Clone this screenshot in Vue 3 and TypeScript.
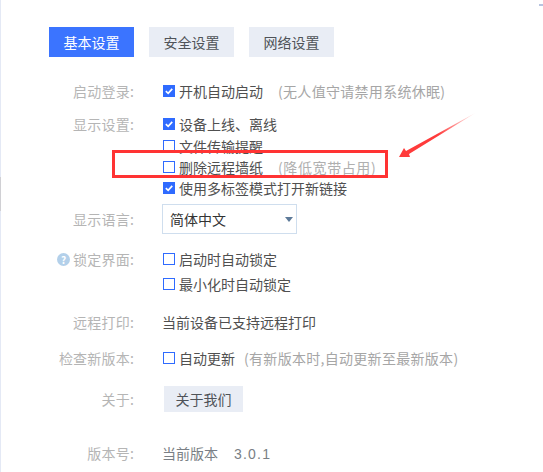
<script setup lang="ts">
const tabs = [
  { label: '基本设置', active: true },
  { label: '安全设置', active: false },
  { label: '网络设置', active: false },
]
</script>

<template>
  <div class="page">
    <div class="tabs">
      <div v-for="t in tabs" :key="t.label" class="tab" :class="{ active: t.active }">{{ t.label }}</div>
    </div>

    <div class="row r-start">
      <div class="label">启动登录:</div>
      <div class="value">
        <span class="cb on"><svg viewBox="0 0 12 12"><path d="M2.2 6.2 5 8.8 9.9 3.4" /></svg></span>
        <span>开机自动启动</span>
        <span class="hint h1">(无人值守请禁用系统休眠)</span>
      </div>
    </div>

    <div class="row r-display">
      <div class="label">显示设置:</div>
      <div class="stack">
        <div class="value line l1">
          <span class="cb on"><svg viewBox="0 0 12 12"><path d="M2.2 6.2 5 8.8 9.9 3.4" /></svg></span>
          <span>设备上线、离线</span>
        </div>
        <div class="value line l2"><span class="cb"></span><span>文件传输提醒</span></div>
        <div class="value line l3">
          <span class="cb"></span><span>删除远程墙纸</span>
          <span class="hint h2">(降低宽带占用)</span>
        </div>
        <div class="value line l4">
          <span class="cb on"><svg viewBox="0 0 12 12"><path d="M2.2 6.2 5 8.8 9.9 3.4" /></svg></span>
          <span>使用多标签模式打开新链接</span>
        </div>
      </div>
    </div>

    <div class="row r-lang">
      <div class="label">显示语言:</div>
      <div class="select"><span>简体中文</span><i class="caret"></i></div>
    </div>

    <div class="row r-lock">
      <div class="label">
        <span class="help">?</span>锁定界面:
      </div>
      <div class="stack lock-stack">
        <div class="value"><span class="cb"></span><span>启动时自动锁定</span></div>
        <div class="value"><span class="cb"></span><span>最小化时自动锁定</span></div>
      </div>
    </div>

    <div class="row r-print">
      <div class="label">远程打印:</div>
      <div class="plain">当前设备已支持远程打印</div>
    </div>

    <div class="row r-update">
      <div class="label">检查新版本:</div>
      <div class="value">
        <span class="cb"></span><span>自动更新</span>
        <span class="hint h3">(有新版本时,自动更新至最新版本)</span>
      </div>
    </div>

    <div class="row r-about">
      <div class="label">关于:</div>
      <div class="about-btn">关于我们</div>
    </div>

    <div class="row r-version">
      <div class="label">版本号:</div>
      <div class="version"><span>当前版本</span><span class="num">3.0.1</span></div>
    </div>

    <div class="mark-box"></div>
    <svg class="arrow" viewBox="0 0 100 60" width="100" height="60">
      <defs>
        <linearGradient id="fade" gradientUnits="userSpaceOnUse" x1="80" y1="2" x2="2" y2="47">
          <stop offset="0" stop-color="#ff3b3b" stop-opacity="0" />
          <stop offset="0.5" stop-color="#ff3b3b" />
          <stop offset="1" stop-color="#ff3b3b" />
        </linearGradient>
      </defs>
      <polygon points="80,2 12,44 13,47 2,47 7,38 9,41" fill="url(#fade)" />
    </svg>
    <i class="edge"></i>
    <i class="edge-grey"></i>
    <i class="corner"></i>
  </div>
</template>

<style>
html, body { margin: 0; background: #fff; }
</style>

<style scoped>
.page {
  position: relative;
  box-sizing: border-box;
  width: 543px;
  height: 472px;
  overflow: hidden;
  padding-top: 27px;
  background: #fff;
  font-family: "Noto Sans CJK SC", "Liberation Sans", sans-serif;
  font-size: 14px;
  color: #505050;
}
.tabs { display: flex; gap: 15px; padding-left: 49px; margin-bottom: 21px; }
.tab {
  width: 85px;
  height: 30px;
  line-height: 30px;
  text-align: center;
  font-size: 14px;
  background: #e9edf5;
  color: #4f5358;
}
.tab.active { background: #3b74ff; color: #fff; }
.row { display: flex; align-items: flex-start; }
.label {
  width: 134px;
  flex: none;
  height: 26px;
  line-height: 26px;
  text-align: right;
  color: #b5b5b5;
  letter-spacing: 0.2px;
  display: flex;
  justify-content: flex-end;
  align-items: center;
}
.value {
  display: flex;
  align-items: center;
  height: 26px;
  margin-left: 29px;
  white-space: nowrap;
}
.cb {
  box-sizing: border-box;
  width: 12px;
  height: 12px;
  flex: none;
  margin-right: 4px;
  border: 1px solid #2f6bff;
  background: #fff;
  display: inline-flex;
}
.cb.on { background: #2f6bff; }
.cb svg { width: 10px; height: 10px; }
.cb svg path { fill: none; stroke: #fff; stroke-width: 2; }
.hint { color: #a6a6a6; letter-spacing: 0.3px; }
.h1 { margin-left: 15px; }
.h2 { margin-left: 15px; color: #b0b0b0; letter-spacing: 0.6px; }
.h3 { margin-left: 9px; }
.r-start { margin-bottom: 7px; height: 26px; }
.r-display { height: 93px; margin-bottom: 0; }
.stack { display: flex; flex-direction: column; }
.line { height: 21px; }
.l1 { height: 26px; margin-bottom: -2px; }
.r-lang { align-items: center; height: 30px; margin-top: 0; margin-bottom: 12px; }
.select {
  box-sizing: border-box;
  width: 135px;
  height: 30px;
  margin-left: 28px;
  padding: 0 3px 0 7px;
  border: 1px solid #cfdeee;
  display: flex;
  align-items: center;
  justify-content: space-between;
  color: #333;
  font-size: 14px;
}
.caret {
  width: 0;
  height: 0;
  border-left: 4px solid transparent;
  border-right: 4px solid transparent;
  border-top: 5px solid #5d7a99;
}
.help {
  width: 13px;
  height: 13px;
  border-radius: 50%;
  background: #b3d0ea;
  color: #fff;
  font-size: 10px;
  line-height: 13px;
  text-align: center;
  font-weight: 700;
  margin-right: 3px;
}
.r-lock { height: 50px; margin-bottom: 13px; }
.lock-stack .value { height: 25px; }
.r-print { height: 26px; margin-bottom: 10px; }
.plain { margin-left: 28px; line-height: 26px; white-space: nowrap; }
.r-update { height: 26px; margin-bottom: 15px; }
.r-about { height: 26px; margin-bottom: 28px; }
.about-btn {
  width: 79px;
  height: 26px;
  line-height: 26px;
  margin-left: 30px;
  text-align: center;
  background: #e9edf5;
  color: #4f5358;
}
.version { margin-left: 28px; line-height: 26px; color: #7a7f85; white-space: nowrap; }
.num { margin-left: 16px; font-size: 14px; letter-spacing: 1.2px; font-family: "Liberation Sans", sans-serif; }
.mark-box {
  position: absolute;
  left: 112px;
  top: 150px;
  width: 276px;
  height: 28px;
  box-sizing: border-box;
  border: 3px solid #f33;
}
.arrow { position: absolute; left: 397px; top: 110px; }
.edge { position: absolute; left: 0; top: 0; bottom: 0; width: 1px; background: #e4e9f5; }
.edge-grey { position: absolute; left: 0; top: 177px; height: 34px; width: 1px; background: #d0d0d4; }
.corner { position: absolute; left: 539px; top: 4px; width: 4px; height: 2px; background: #b7c3e0; }
</style>
